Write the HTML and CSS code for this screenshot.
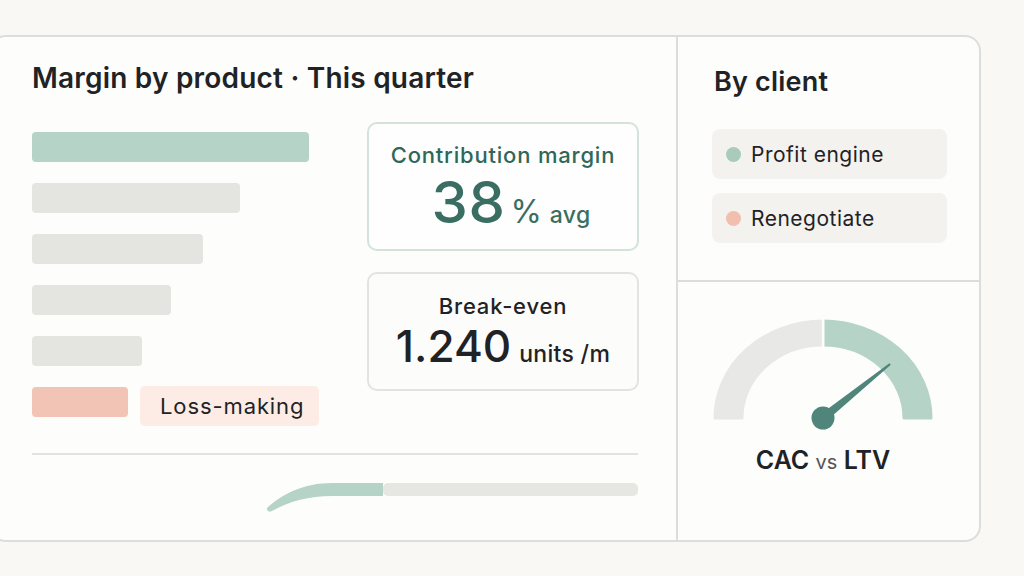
FILE: index.html
```html
<!DOCTYPE html>
<html lang="en">
<head>
    <meta charset="UTF-8">
    <title>Margin by product</title>
    <link rel="stylesheet" href="styles.css">
</head>
<body>
    <div class="board">
        <section class="product">
            <h1 class="title">Margin by product · This quarter</h1>
            <div class="chart-grid">
                <div class="bars">
                    <div class="bar bar-top" style="width: 277px"></div>
                    <div class="bar" style="width: 208px"></div>
                    <div class="bar" style="width: 171px"></div>
                    <div class="bar" style="width: 139px"></div>
                    <div class="bar" style="width: 110px"></div>
                    <div class="bar-row">
                        <div class="bar bar-loss" style="width: 96px"></div>
                        <span class="loss-tag">Loss-making</span>
                    </div>
                </div>
                <div class="metrics">
                    <div class="metric metric-main">
                        <div class="metric-label">Contribution margin</div>
                        <div class="metric-value"><span class="big">38</span><span class="pct">%</span><span class="unit">avg</span></div>
                    </div>
                    <div class="metric metric-alt">
                        <div class="metric-label">Break-even</div>
                        <div class="metric-value"><span class="big">1.240</span><span class="unit">units /m</span></div>
                    </div>
                </div>
            </div>
            <hr class="divider">
            <svg class="progress" width="606" height="34" viewBox="0 0 606 34">
                <rect x="351" y="2" width="255" height="13" rx="5" fill="#e6e6e3"/>
                <path d="M 351 2 L 300 2 C 272 2 250 13 235 27 Q 235 32 240 30 C 256 21 276 15 300 15 L 351 15 Z" fill="#b5d3c6"/>
            </svg>
        </section>
        <aside class="side">
            <div class="clients">
                <h2 class="side-title">By client</h2>
                <div class="client-pill"><span class="dot dot-green"></span>Profit engine</div>
                <div class="client-pill"><span class="dot dot-pink"></span>Renegotiate</div>
            </div>
            <div class="gauge-box">
                <svg class="gauge" width="220" height="112" viewBox="0 0 220 112">
                    <path d="M2 100 A108 97 0 0 1 110 3 L110 27 A81 73 0 0 0 29 100 Z" fill="#e8e8e6" stroke="#e8e8e6" stroke-width="3" stroke-linejoin="round"/>
                    <path d="M110 3 A108 97 0 0 1 218 100 L191 100 A81 73 0 0 0 110 27 Z" fill="#b5d3c6" stroke="#b5d3c6" stroke-width="3" stroke-linejoin="round"/>
                    <rect x="108.5" y="0" width="3" height="30" fill="#fdfdfc"/>
                    <polygon points="112.8,103.5 107.2,96.5 176.4,45.2 177.8,46.8" fill="#4f857a"/>
                    <circle cx="110" cy="100" r="11.5" fill="#4f857a"/>
                </svg>
                <div class="gauge-label">CAC <span class="vs">vs</span> LTV</div>
            </div>
        </aside>
    </div>
</body>
</html>
```

FILE: styles.css
```css
body {
    margin: 0;
    background: #f9f8f5;
    font-family: Inter, "Noto Sans", sans-serif;
    color: #1f2326;
}
.board {
    box-sizing: border-box;
    margin: 35px 0 0 -10px;
    width: 991px;
    height: 507px;
    border: 2px solid #dddddb;
    border-radius: 16px;
    background: #fdfdfc;
    display: flex;
}
.product {
    box-sizing: border-box;
    width: 686px;
    padding: 24px 38px 0 40px;
    border-right: 2px solid #dddddb;
}
.title {
    margin: 0;
    font-size: 28px;
    line-height: 34px;
    font-weight: 600;
    letter-spacing: 0.2px;
}
.chart-grid {
    display: grid;
    grid-template-columns: 290px 272px;
    column-gap: 45px;
    margin-top: 27px;
}
.bars {
    padding-top: 10px;
    display: flex;
    flex-direction: column;
    gap: 21px;
}
.bar {
    height: 30px;
    border-radius: 4px;
    background: #e4e4e1;
}
.bar-top {
    background: #b6d3c7;
}
.bar-row {
    display: flex;
    align-items: flex-start;
    gap: 12px;
}
.bar-loss {
    background: #f2c4b6;
}
.loss-tag {
    margin-top: -1px;
    height: 40px;
    padding: 0 15px 0 20px;
    border-radius: 5px;
    background: #fdece6;
    font-size: 22px;
    line-height: 40px;
    letter-spacing: 0.9px;
}
.metrics {
    display: flex;
    flex-direction: column;
    gap: 21px;
}
.metric {
    box-sizing: border-box;
    border-radius: 10px;
    text-align: center;
}
.metric-main {
    height: 129px;
    padding-top: 18px;
    border: 2px solid #d3e3dc;
    background: #fefefe;
    color: #2f6759;
}
.metric-alt {
    height: 119px;
    padding-top: 19px;
    border: 2px solid #e3e3e1;
    background: #fcfcfb;
}
.metric-label {
    font-size: 22px;
    line-height: 26px;
    font-weight: 500;
    letter-spacing: 0.8px;
}
.metric-main .metric-label {
    color: #2f6759;
}
.metric-value {
    margin-top: 6px;
}
.metric-main .metric-value {
    padding-left: 16px;
}
.metric-alt .metric-value {
    margin-top: 5px;
}
.metric-main .big {
    font-size: 58px;
    line-height: 56px;
    font-weight: 500;
    color: #3a6e62;
    letter-spacing: 0.5px;
}
.metric-alt .big {
    font-size: 44px;
    line-height: 44px;
    font-weight: 500;
}
.pct {
    margin-left: 5px;
    font-size: 32px;
    color: #3a6e62;
}
.unit {
    margin-left: 8px;
    font-size: 23px;
    font-weight: 500;
    letter-spacing: 0.3px;
}
.metric-main .unit {
    color: #3a6e62;
}
.divider {
    margin: 27px 0 0;
    border: 0;
    border-top: 2px solid #e3e3e1;
}
.progress {
    display: block;
    margin-top: 26px;
}
.side {
    flex: 1;
    display: flex;
    flex-direction: column;
}
.clients {
    box-sizing: border-box;
    height: 245px;
    padding: 29px 0 0 34px;
    border-bottom: 2px solid #dddddb;
}
.side-title {
    margin: 0 0 31px 2px;
    font-size: 27px;
    line-height: 32px;
    font-weight: 600;
    letter-spacing: 0.2px;
}
.client-pill {
    box-sizing: border-box;
    width: 235px;
    height: 50px;
    margin-bottom: 14px;
    padding-left: 14px;
    display: flex;
    align-items: center;
    gap: 10px;
    border-radius: 8px;
    background: #f3f2ef;
    font-size: 21px;
    letter-spacing: 0.5px;
}
.dot {
    width: 15px;
    height: 15px;
    border-radius: 50%;
}
.dot-green {
    background: #a9cbbd;
}
.dot-pink {
    background: #f2bfae;
}
.gauge-box {
    padding: 36px 0 0 35px;
}
.gauge {
    display: block;
}
.gauge-label {
    margin-top: 16px;
    width: 220px;
    text-align: center;
    font-size: 25px;
    line-height: 28px;
    font-weight: 600;
}
.vs {
    font-size: 20px;
    font-weight: 400;
    color: #555;
}
```
